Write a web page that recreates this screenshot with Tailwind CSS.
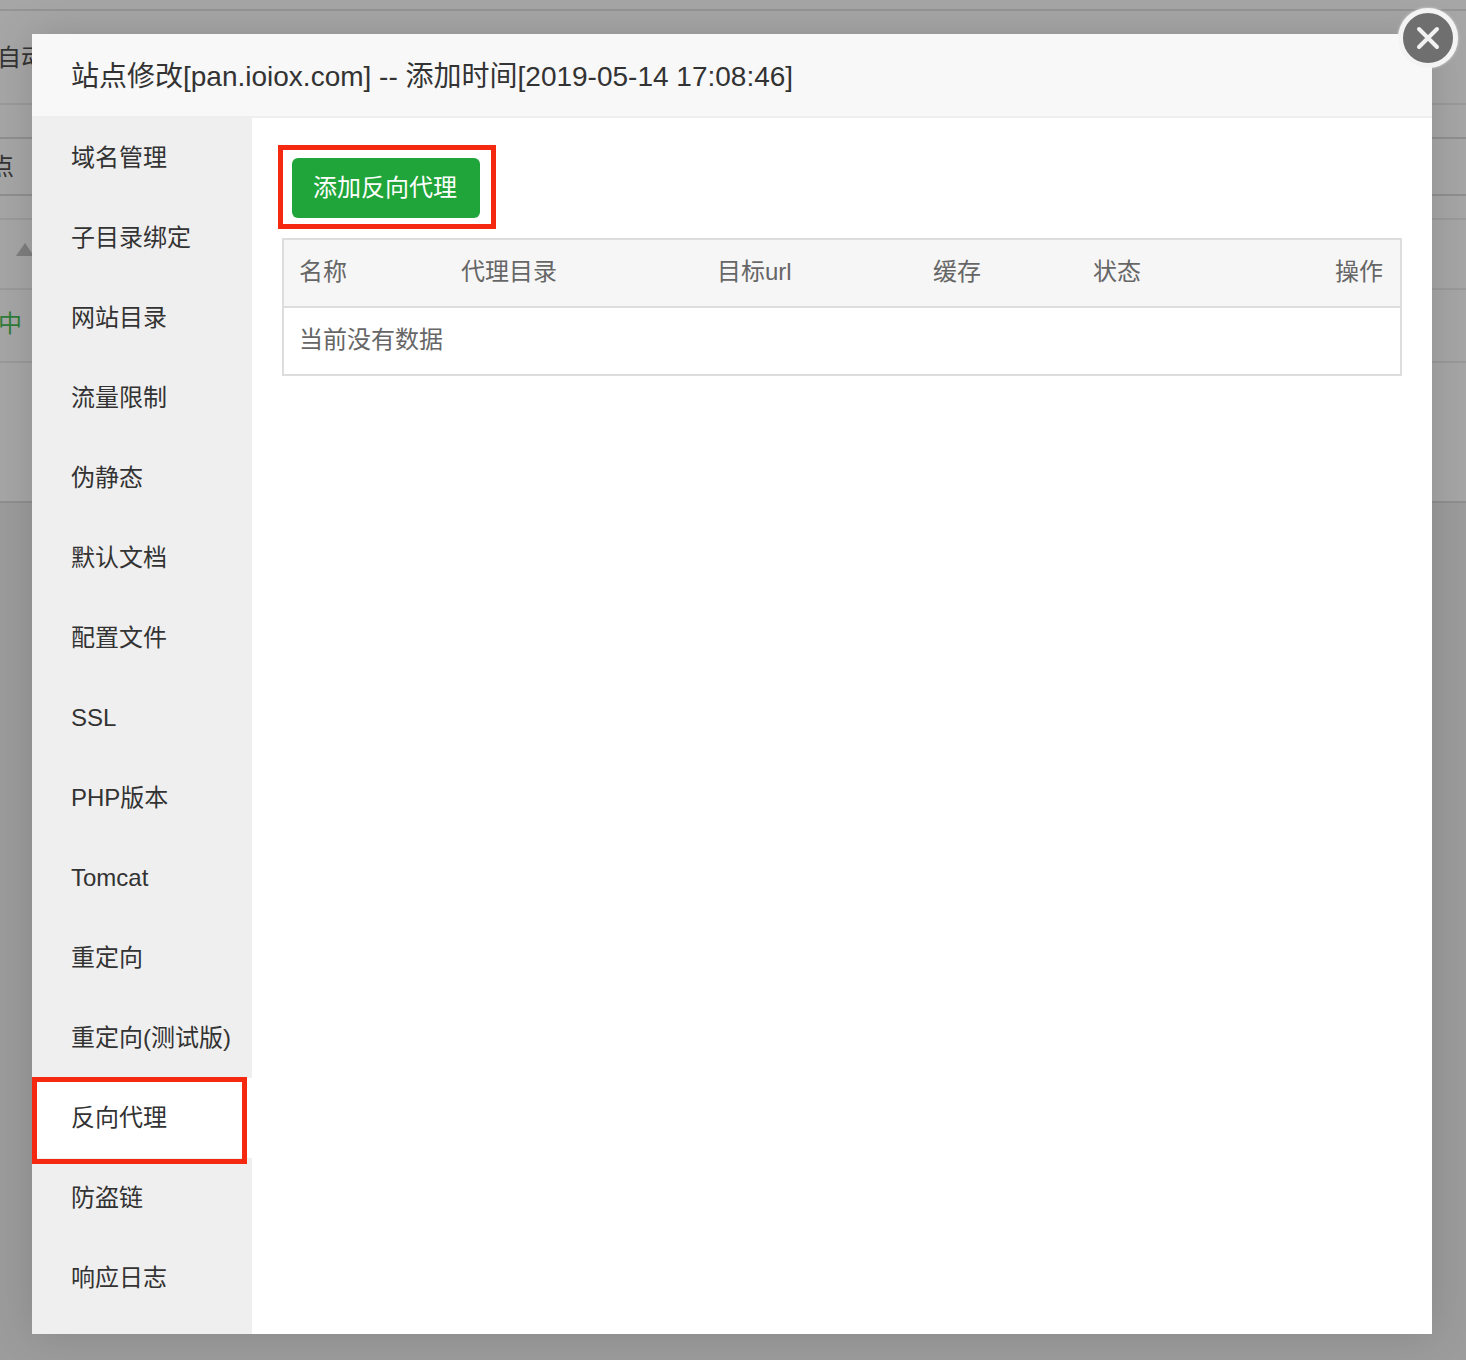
<!DOCTYPE html>
<html lang="zh-CN">
<head>
    <meta charset="UTF-8">
    <title>站点修改</title>
    <script src="https://cdn.jsdelivr.net/npm/@tailwindcss/browser@4"></script>
</head>
<body class="bg-[#9c9c9c] font-['Liberation_Sans','Noto_Sans_CJK_SC',sans-serif]">
    <div class="relative h-[1360px] w-[1466px] overflow-hidden">
        <!-- page behind the backdrop -->
        <div class="h-[503px] bg-[#a6a6a6] border-b-2 border-[#8f8f8f] whitespace-nowrap">
            <div class="h-[11px] border-b-2 border-[#949494]"></div>
            <div class="h-[94px] flex items-center text-2xl text-[#333] leading-none pt-[2px] pl-0 border-b-2 border-[#9a9a9a]"><span class="-ml-[3px]">自动</span></div>
            <div class="h-[32px]"></div>
            <div class="h-[59px] flex items-center text-2xl text-[#333] leading-none border-y-2 border-[#8f8f8f]"><span class="-ml-[34px]">站点</span></div>
            <div class="h-[22px]"></div>
            <div class="h-[72px] border-y-2 border-[#9a9a9a] flex items-center pl-4">
                <div class="w-0 h-0 border-x-[9px] border-x-transparent border-b-[13px] border-b-[#7f7f7f] -mt-[9px]"></div>
            </div>
            <div class="h-[73px] flex items-center text-2xl text-[#2f7d3a] leading-none pb-[4px] border-b-2 border-[#9a9a9a]"><span class="-ml-[2px]">中</span></div>
        </div>

        <!-- modal -->
        <div class="absolute left-[32px] top-[34px] w-[1400px] h-[1300px] bg-white flex flex-col shadow-[0_0_40px_rgba(0,0,0,0.14)]">
            <div class="h-[84px] shrink-0 bg-[#f8f8f8] border-b-2 border-[#eeeeee] pl-[39px] flex items-center text-[28px] text-[#333] pt-[4px]">站点修改[pan.ioiox.com] -- 添加时间[2019-05-14 17:08:46]</div>
            <div class="flex flex-1 min-h-0">
                <ul class="w-[220px] shrink-0 bg-[#efefef] text-2xl text-[#333]">
                    <li class="h-[80px] pl-[39px] flex items-center">域名管理</li>
                    <li class="h-[80px] pl-[39px] flex items-center">子目录绑定</li>
                    <li class="h-[80px] pl-[39px] flex items-center">网站目录</li>
                    <li class="h-[80px] pl-[39px] flex items-center">流量限制</li>
                    <li class="h-[80px] pl-[39px] flex items-center">伪静态</li>
                    <li class="h-[80px] pl-[39px] flex items-center">默认文档</li>
                    <li class="h-[80px] pl-[39px] flex items-center">配置文件</li>
                    <li class="h-[80px] pl-[39px] flex items-center">SSL</li>
                    <li class="h-[80px] pl-[39px] flex items-center">PHP版本</li>
                    <li class="h-[80px] pl-[39px] flex items-center">Tomcat</li>
                    <li class="h-[80px] pl-[39px] flex items-center">重定向</li>
                    <li class="h-[80px] pl-[39px] flex items-center whitespace-nowrap">重定向(测试版)</li>
                    <li class="relative h-[80px] pl-[39px] flex items-center bg-white">反向代理
                        <div class="absolute left-0 top-[-1px] w-[215px] h-[87px] border-[5px] border-[#f5290f]"></div>
                    </li>
                    <li class="h-[80px] pl-[39px] flex items-center">防盗链</li>
                    <li class="h-[80px] pl-[39px] flex items-center">响应日志</li>
                </ul>
                <div class="flex-1 pl-[30px] pr-[30px] pt-[40px]">
                    <div class="relative w-fit">
                        <button class="block h-[60px] w-[188px] ml-[10px] pr-[2px] rounded-[6px] bg-[#20a53a] text-2xl text-white">添加反向代理</button>
                        <div class="absolute left-[-4px] top-[-13px] w-[218px] h-[84px] border-[5px] border-[#f5290f]"></div>
                    </div>
                    <table class="mt-[20px] w-[1120px] table-fixed border-2 border-[#dddddd] text-2xl text-[#666]">
                        <thead>
                            <tr class="h-[68px] bg-[#f6f6f6] border-b-2 border-[#dddddd] text-left">
                                <th class="w-[178px] pl-[15px] pb-[2px] font-normal">名称</th>
                                <th class="w-[256px] pb-[2px] font-normal">代理目录</th>
                                <th class="w-[216px] pb-[2px] font-normal">目标url</th>
                                <th class="w-[160px] pb-[2px] font-normal">缓存</th>
                                <th class="pb-[2px] font-normal">状态</th>
                                <th class="w-[120px] pr-[17px] pb-[2px] text-right font-normal">操作</th>
                            </tr>
                        </thead>
                        <tbody>
                            <tr class="h-[68px]">
                                <td colspan="6" class="pl-[15px] pb-[2px]">当前没有数据</td>
                            </tr>
                        </tbody>
                    </table>
                </div>
            </div>
            <!-- close button -->
            <div class="absolute left-[1366px] top-[-26px] w-[60px] h-[60px] rounded-full bg-[#6f6f6f] border-[5px] border-[#f4f4f4] flex items-center justify-center shadow-[0_0_3px_rgba(255,255,255,0.6)]">
                <svg width="26" height="26" viewBox="0 0 26 26" fill="none" stroke="#f2f2f2" stroke-width="4" stroke-linecap="round"><path d="M4 4 22 22M22 4 4 22"/></svg>
            </div>
        </div>
    </div>
</body>
</html>
